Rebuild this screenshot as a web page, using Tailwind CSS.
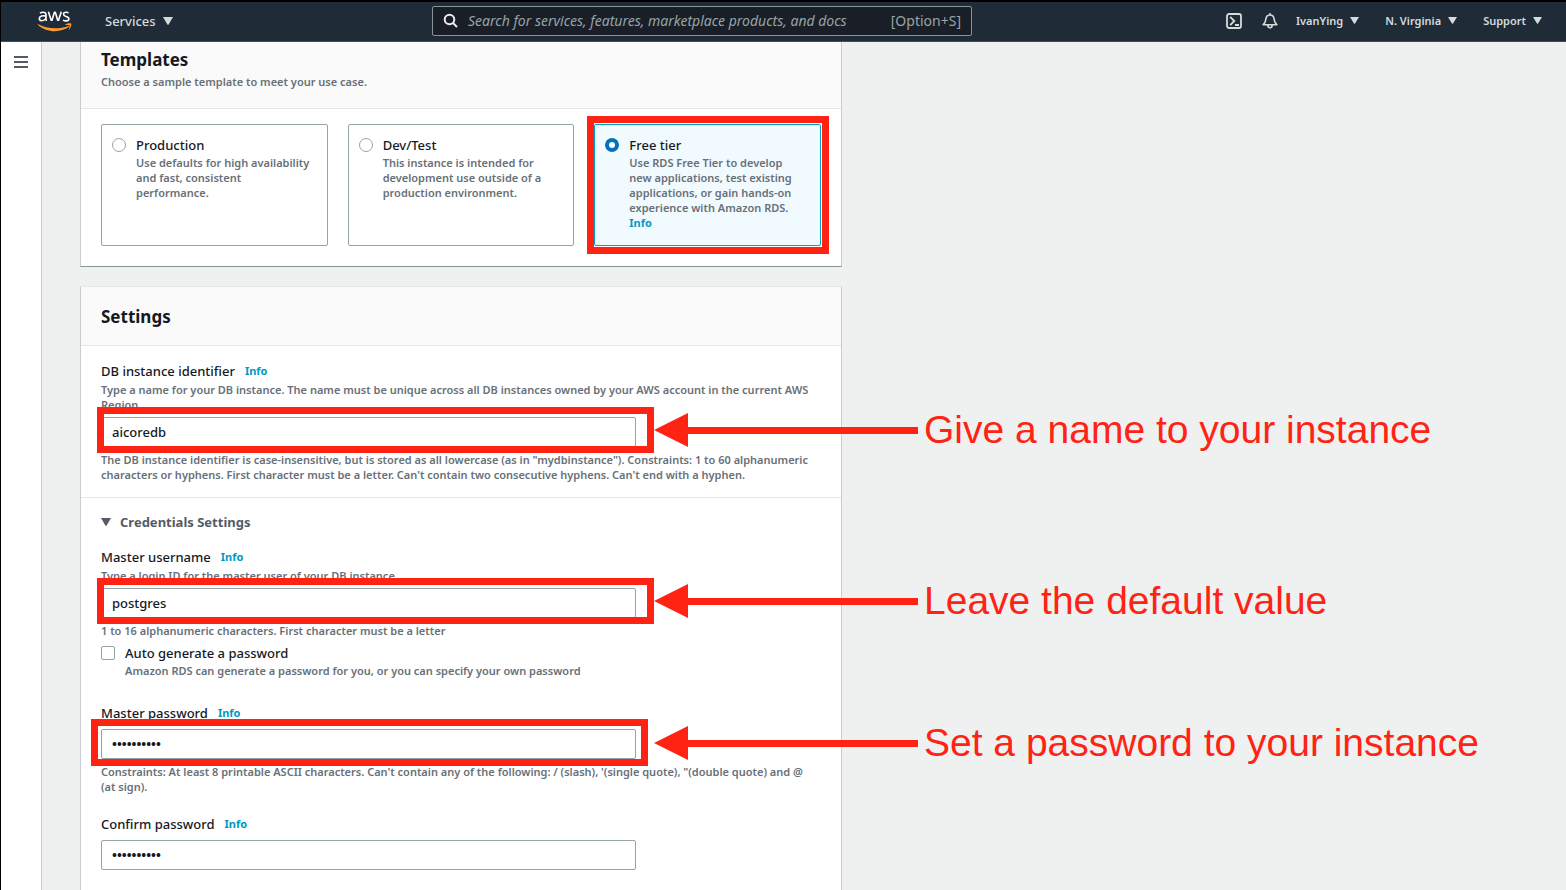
<!DOCTYPE html>
<html lang="en">
<head>
<meta charset="utf-8">
<meta name="viewport" content="width=device-width, initial-scale=1">
<title>Create database - RDS</title>
<script src="https://cdn.jsdelivr.net/npm/@tailwindcss/browser@4"></script>
</head>
<body class="flex h-screen flex-col overflow-hidden border-l border-black bg-[#eff1f1] font-['Noto_Sans',sans-serif] text-[13px] leading-5 font-medium text-[#16191f]">

<header class="flex h-[42px] shrink-0 items-center border-t-2 border-b border-t-black border-b-[#414d5c] bg-[#202b38] pb-[2px] text-[#d5dbdb]">
  <div class="flex w-[431px] shrink-0 items-center pl-9">
    <a href="#" aria-label="AWS home" class="block w-[68px]">
      <svg class="h-[22px] w-9" viewBox="0 0 36 22" fill="none" aria-hidden="true">
        <g stroke="#fff" stroke-width="1.6" stroke-linejoin="round">
          <path d="M2.900 3.200C4 2.500 5 2.200 6.100 2.200c1.900 0 2.900.9 2.900 2.600v4.100c0 .9.200 1.400.6 2M9 6.100C6 5.400 2.300 5.700 2.300 8.500c0 1.300.9 2.200 2.400 2.200C6.900 10.700 9 9.300 9 7.100"/>
          <path d="M11.400 1.800l2.800 8.500h.8L17.400 2.300h.9L20.700 10.300h.8L24.300 1.800"/>
          <path d="M31.600 2.700c-.9-.4-1.700-.5-2.500-.5-1.600 0-2.600.8-2.600 2 0 1.300 1 1.700 2.600 2.200 1.800.5 2.800.9 2.800 2.300s-1.200 2.200-2.900 2.200c-1.100 0-2.100-.3-3-.8"/>
        </g>
        <path d="M1.300 14.300C10 19.200 22.400 19.500 31.500 15.900c.8-.4 1.200.3.500.9C23.200 23 9.500 22.700 1 14.900c-.5-.5-.2-.9.3-.6z" fill="#ff9933"/>
        <path d="M28.200 14.500c2.200-1.500 5.300-1.400 5.900-.9.600.8-.1 4.200-1.800 5.900-.4.300-.7.100-.5-.3.500-1.200 1.200-3.300.8-3.900-.5-.6-2.900-.4-4-.3-.4 0-.7-.2-.4-.5z" fill="#ff9933"/>
      </svg>
    </a>
    <button type="button" class="flex items-center gap-[7px]">Services
      <svg class="h-2 w-[10px]" viewBox="0 0 10 8" fill="currentColor" aria-hidden="true"><path d="M0 0h10L5.600 7.500q-.6.900-1.200 0z"/></svg>
    </button>
  </div>
  <div class="flex h-[30px] w-[540px] items-center gap-[9px] rounded-xs border border-[#879596] bg-[#1a1e26] px-[10px] text-[14px] font-normal text-[#95a5a6]">
    <svg class="size-4 shrink-0" viewBox="0 0 16 16" fill="none" stroke="#eaeded" stroke-width="2" aria-hidden="true"><circle cx="6.500" cy="6.500" r="4.800"/><path d="M10 10l4 4"/></svg>
    <input type="search" aria-label="Search" placeholder="Search for services, features, marketplace products, and docs" class="min-w-0 flex-1 bg-transparent italic outline-none placeholder:text-[#95a5a6] placeholder:opacity-100">
    <span class="shrink-0">[Option+S]</span>
  </div>
  <nav class="ml-auto flex items-center pr-6 text-[11px] font-semibold">
    <button type="button" aria-label="CloudShell" class="mr-5">
      <svg class="size-4" viewBox="0 0 16 16" fill="none" stroke="currentColor" stroke-width="1.800" aria-hidden="true"><rect x="1" y="1" width="14" height="14" rx="2"/><path d="M4.200 3.800L8.300 8l-4.100 4.200M9 12h4"/></svg>
    </button>
    <button type="button" aria-label="Notifications" class="mr-[18px]">
      <svg class="size-4" viewBox="0 0 16 16" fill="none" stroke="currentColor" stroke-width="1.600" stroke-linejoin="round" aria-hidden="true"><path d="M8 0v2M1.200 11.700C3.800 9.500 3.500 8 3.900 5.800 4.300 3.500 5.700 2 8 2s3.700 1.500 4.100 3.800c.4 2.200.1 3.700 2.700 5.900zM5.800 12c0 1.700.9 2.800 2.200 2.800s2.200-1.100 2.200-2.800"/></svg>
    </button>
    <button type="button" class="mr-[26px] flex items-center gap-[7px]">IvanYing
      <svg class="h-[7px] w-[9px]" viewBox="0 0 9 7" fill="currentColor" aria-hidden="true"><path d="M0 0h9L5 6.600q-.5.600-1 0z"/></svg>
    </button>
    <button type="button" class="mr-[26px] flex items-center gap-[7px]">N. Virginia
      <svg class="h-[7px] w-[9px]" viewBox="0 0 9 7" fill="currentColor" aria-hidden="true"><path d="M0 0h9L5 6.600q-.5.600-1 0z"/></svg>
    </button>
    <button type="button" class="flex items-center gap-[7px]">Support
      <svg class="h-[7px] w-[9px]" viewBox="0 0 9 7" fill="currentColor" aria-hidden="true"><path d="M0 0h9L5 6.600q-.5.600-1 0z"/></svg>
    </button>
  </nav>
</header>

<div class="flex min-h-0 flex-1">
  <aside class="w-[41px] shrink-0 border-r border-[#c9cdd0] bg-white pt-3 pl-3">
    <button type="button" aria-label="Open navigation" class="block p-px">
      <svg class="h-[14px] w-[14px]" viewBox="0 0 14 14" stroke="#545b64" stroke-width="2" aria-hidden="true"><path d="M0 2h14M0 7h14M0 12h14"/></svg>
    </button>
  </aside>

  <main class="min-w-0 flex-1 pl-[38px]">
    <form class="max-w-[762px]">
      <section class="border-x border-b border-x-[#c9cdd0] border-b-[#879596] bg-white">
        <div class="border-b border-[#e4e8e8] bg-[#fafafa] px-5 pt-[6px] pb-[19px]">
          <h2 class="text-[17px] leading-6 font-bold">Templates</h2>
          <p class="mt-[2px] text-[11px] leading-[15px] font-semibold text-[#687078]">Choose a sample template to meet your use case.</p>
        </div>
        <div class="grid grid-cols-3 gap-5 px-5 pt-[15px] pb-5">
          <label class="flex h-[122px] gap-[10px] rounded-xs border border-[#95a5a6] px-[10px] pt-[10px]">
            <input type="radio" name="template" class="mt-[3px] size-[14px] shrink-0 appearance-none rounded-full border border-[#95a5a6] bg-white checked:border-4 checked:border-[#0073bb]">
            <span class="whitespace-nowrap">Production
              <span class="block text-[11px] leading-[15px] font-semibold text-[#687078]">Use defaults for high availability<br>and fast, consistent<br>performance.</span>
            </span>
          </label>
          <label class="flex h-[122px] gap-[10px] rounded-xs border border-[#95a5a6] px-[10px] pt-[10px]">
            <input type="radio" name="template" class="mt-[3px] size-[14px] shrink-0 appearance-none rounded-full border border-[#95a5a6] bg-white checked:border-4 checked:border-[#0073bb]">
            <span class="whitespace-nowrap">Dev/Test
              <span class="block text-[11px] leading-[15px] font-semibold text-[#687078]">This instance is intended for<br>development use outside of a<br>production environment.</span>
            </span>
          </label>
          <div class="relative">
            <label class="flex h-[122px] gap-[10px] rounded-xs border border-[#00a1c9] bg-[#f1faff] px-[10px] pt-[10px]">
              <input type="radio" name="template" checked class="mt-[3px] size-[14px] shrink-0 appearance-none rounded-full border border-[#95a5a6] bg-white checked:border-4 checked:border-[#0073bb]">
              <span class="whitespace-nowrap">Free tier
                <span class="block text-[11px] leading-[15px] font-semibold text-[#687078]">Use RDS Free Tier to develop<br>new applications, test existing<br>applications, or gain hands-on<br>experience with Amazon RDS.<br><a href="#" class="font-bold text-[#0099c2]">Info</a></span>
              </span>
            </label>
            <div class="pointer-events-none absolute -top-2 -right-2 -bottom-2 -left-[7px] border-[7px] border-[#ff2314]"></div>
          </div>
        </div>
      </section>

      <section class="mt-[19px] border border-[#c9cdd0] border-t-[#e4e8e8] bg-white">
        <div class="border-b border-[#e4e8e8] bg-[#fafafa] px-5 pt-[18px] pb-4">
          <h2 class="text-[17px] leading-6 font-bold">Settings</h2>
        </div>

        <div class="border-b border-[#e4e8e8] px-5 pt-[15px] pb-[15px]">
          <div class="flex items-center gap-[10px]"><label for="db-id">DB instance identifier</label><a href="#" class="text-[11px] font-bold text-[#0099c2]">Info</a></div>
          <p class="mt-px text-[11px] leading-[15px] font-semibold whitespace-nowrap text-[#687078]">Type a name for your DB instance. The name must be unique across all DB instances owned by your AWS account in the current AWS<br>Region.</p>
          <div class="relative mt-[5px]">
            <input id="db-id" type="text" value="aicoredb" class="block h-[30px] w-full max-w-[535px] rounded-xs border border-[#95a5a6] bg-white px-[10px] outline-none">
            <div class="pointer-events-none absolute -top-[10px] -left-1 flex h-[46px] items-center whitespace-nowrap">
              <div class="h-[46px] w-[557px] border-[7px] border-[#ff2314]"></div>
              <svg class="h-[34px] w-[264px] shrink-0" viewBox="0 0 264 34" fill="#ff2314" aria-hidden="true"><path d="M0 17L34 0v14h230v7H34v13z"/></svg>
              <span class="ml-[6px] font-['Liberation_Sans',sans-serif] text-[39px] font-normal text-[#ff2314]">Give a name to your instance</span>
            </div>
          </div>
          <p class="mt-[5px] text-[11px] leading-[15px] font-semibold whitespace-nowrap text-[#687078]">The DB instance identifier is case-insensitive, but is stored as all lowercase (as in "mydbinstance"). Constraints: 1 to 60 alphanumeric<br>characters or hyphens. First character must be a letter. Can't contain two consecutive hyphens. Can't end with a hyphen.</p>
        </div>

        <div class="px-5 pt-[14px] pb-10">
          <button type="button" class="flex items-center gap-[9px] font-bold text-[#545b64]">
            <svg class="h-2 w-[10px]" viewBox="0 0 10 8" fill="currentColor" aria-hidden="true"><path d="M0 0h10L5.600 7.500q-.6.900-1.200 0z"/></svg>
            Credentials Settings
          </button>

          <div class="mt-[15px] flex items-center gap-[10px]"><label for="user">Master username</label><a href="#" class="text-[11px] font-bold text-[#0099c2]">Info</a></div>
          <p class="mt-px text-[11px] leading-[15px] font-semibold text-[#687078]">Type a login ID for the master user of your DB instance.</p>
          <div class="relative mt-[5px]">
            <input id="user" type="text" value="postgres" class="block h-[30px] w-full max-w-[535px] rounded-xs border border-[#95a5a6] bg-white px-[10px] outline-none">
            <div class="pointer-events-none absolute -top-[10px] -left-1 flex h-[46px] items-center whitespace-nowrap">
              <div class="h-[46px] w-[557px] border-[7px] border-[#ff2314]"></div>
              <svg class="h-[34px] w-[264px] shrink-0" viewBox="0 0 264 34" fill="#ff2314" aria-hidden="true"><path d="M0 17L34 0v14h230v7H34v13z"/></svg>
              <span class="ml-[6px] font-['Liberation_Sans',sans-serif] text-[39px] font-normal text-[#ff2314]">Leave the default value</span>
            </div>
          </div>
          <p class="mt-[5px] text-[11px] leading-[15px] font-semibold text-[#687078]">1 to 16 alphanumeric characters. First character must be a letter</p>

          <div class="mt-[5px] flex gap-[10px]">
            <input id="auto" type="checkbox" class="mt-[3px] size-[14px] shrink-0 appearance-none rounded-xs border border-[#95a5a6] bg-white checked:bg-[#0073bb]">
            <label for="auto">Auto generate a password
              <span class="block text-[11px] leading-[15px] font-semibold text-[#687078]">Amazon RDS can generate a password for you, or you can specify your own password</span>
            </label>
          </div>

          <div class="mt-[25px] flex items-center gap-[10px]"><label for="pw">Master password</label><a href="#" class="text-[11px] font-bold text-[#0099c2]">Info</a></div>
          <div class="relative mt-[6px]">
            <input id="pw" type="password" value="password12" class="block h-[30px] w-full max-w-[535px] rounded-xs border border-[#95a5a6] bg-white px-[10px] font-bold outline-none">
            <div class="pointer-events-none absolute -top-[10px] -left-[10px] flex h-[47px] items-center whitespace-nowrap">
              <div class="h-[47px] w-[557px] border-[7px] border-[#ff2314]"></div>
              <svg class="ml-[6px] h-[34px] w-[264px] shrink-0" viewBox="0 0 264 34" fill="#ff2314" aria-hidden="true"><path d="M0 17L34 0v14h230v7H34v13z"/></svg>
              <span class="ml-[6px] font-['Liberation_Sans',sans-serif] text-[39px] font-normal text-[#ff2314]">Set a password to your instance</span>
            </div>
          </div>
          <p class="mt-[5px] text-[11px] leading-[15px] font-semibold whitespace-nowrap text-[#687078]">Constraints: At least 8 printable ASCII characters. Can't contain any of the following: / (slash), '(single quote), "(double quote) and @<br>(at sign).</p>

          <div class="mt-5 flex items-center gap-[10px]"><label for="pw2">Confirm password</label><a href="#" class="text-[11px] font-bold text-[#0099c2]">Info</a></div>
          <input id="pw2" type="password" value="password12" class="mt-[6px] block h-[30px] w-full max-w-[535px] rounded-xs border border-[#95a5a6] bg-white px-[10px] font-bold outline-none">
        </div>
      </section>
    </form>
  </main>
</div>
</body>
</html>
